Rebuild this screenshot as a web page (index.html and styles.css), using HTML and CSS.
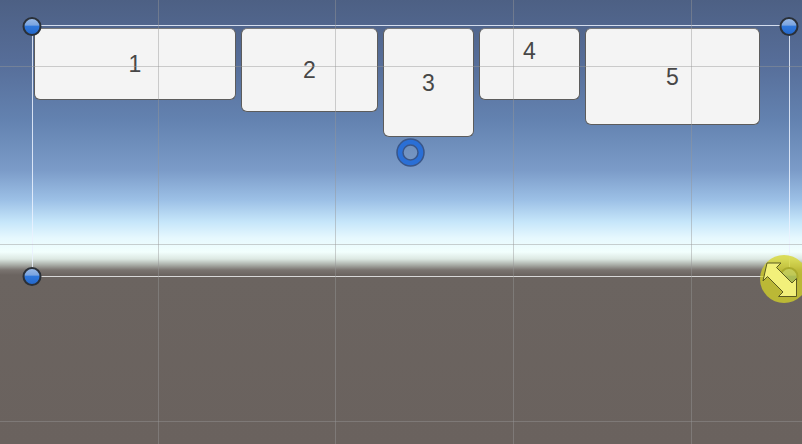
FILE: index.html
```html
<!DOCTYPE html>
<html>
<head>
<meta charset="utf-8">
<link rel="stylesheet" href="styles.css">
</head>
<body>
<div class="scene">
  <div class="rect">
    <div class="layout">
      <div class="btn b1">1</div>
      <div class="btn b2">2</div>
      <div class="btn b3">3</div>
      <div class="btn b4">4</div>
      <div class="btn b5">5</div>
    </div>
  </div>
  <svg class="grid" width="802" height="444" viewBox="0 0 802 444">
    <g stroke="rgba(150,150,150,0.45)" stroke-width="1">
      <line x1="158.5" y1="0" x2="158.5" y2="444"/>
      <line x1="335.5" y1="0" x2="335.5" y2="444"/>
      <line x1="513.5" y1="0" x2="513.5" y2="444"/>
      <line x1="691.5" y1="0" x2="691.5" y2="444"/>
      <line x1="0" y1="66.5" x2="802" y2="66.5"/>
      <line x1="0" y1="244.5" x2="802" y2="244.5"/>
      <line x1="0" y1="421.5" x2="802" y2="421.5"/>
    </g>
  </svg>
  <svg class="gizmos" width="802" height="444" viewBox="0 0 802 444">
    <defs>
      <linearGradient id="hb" x1="0" y1="0" x2="0" y2="1">
        <stop offset="0" stop-color="#9cbce8"/>
        <stop offset="0.42" stop-color="#7aa4e0"/>
        <stop offset="0.48" stop-color="#2f78dc"/>
        <stop offset="1" stop-color="#2466c8"/>
      </linearGradient>
    </defs>
    <g stroke="#2a3038" stroke-width="2" fill="url(#hb)">
      <circle cx="32" cy="26.5" r="8.5"/>
      <circle cx="789" cy="26.5" r="8.5"/>
      <circle cx="32" cy="276.5" r="8.5"/>
      <circle cx="789" cy="276.5" r="8.5"/>
    </g>
    <circle cx="410.5" cy="152.5" r="10.5" fill="none" stroke="#3a5688" stroke-width="7.5"/>
    <circle cx="410.5" cy="152.5" r="10.5" fill="none" stroke="#2a6fd6" stroke-width="4.5"/>
    <circle cx="784" cy="279" r="24" fill="rgba(214,212,40,0.75)"/>
    <g stroke="#5a5a20" stroke-width="1" fill="#f2f07a" stroke-linejoin="miter">
      <path d="M767 263 L781 263 L776.5 267.5 L792 283 L796.5 278.5 L796.5 296.5 L778.5 296.5 L783 292 L767.5 276.5 L763 281 Z"/>
    </g>
  </svg>
</div>
</body>
</html>
```

FILE: styles.css
```css
html, body {
  margin: 0;
  padding: 0;
  width: 802px;
  height: 444px;
  overflow: hidden;
}

.scene {
  position: relative;
  width: 802px;
  height: 444px;
  overflow: hidden;
  font-family: "Liberation Sans", Arial, sans-serif;
  background: linear-gradient(to bottom,
    #4d6084 0px,
    #566d98 60px,
    #6382b0 120px,
    #7b9bc8 170px,
    #9cc0e6 200px,
    #c6e6fa 222px,
    #e6f8fe 238px,
    #f2fffd 252px,
    #dce8e2 259px,
    #a8aca6 265px,
    #7a7470 270px,
    #6b6460 275px,
    #6a625e 444px);
}

.rect {
  position: absolute;
  left: 32px;
  top: 25px;
  width: 756px;
  height: 250px;
  border: 1px solid rgba(235, 242, 255, 0.85);
  border-bottom-color: #d8d8d8;
}

.layout {
  display: flex;
  align-items: flex-start;
  gap: 5px;
  padding: 2px 0 0 1px;
}

.btn {
  box-sizing: border-box;
  background: #f4f4f4;
  border: 1px solid #5c5c5c;
  border-top-color: #7a7a7a;
  border-radius: 6px;
  color: #474747;
  font-size: 23px;
  line-height: 24px;
  display: flex;
  align-items: center;
  justify-content: center;
}

.b1 { width: 202px; height: 72px; }
.b2 { width: 137px; height: 84px; }
.b3 { width: 91px; height: 109px; }
.b4 { width: 101px; height: 72px; align-items: flex-start; padding-top: 10px; }
.b5 { width: 175px; height: 97px; }

.grid, .gizmos {
  position: absolute;
  left: 0;
  top: 0;
  pointer-events: none;
}
```
